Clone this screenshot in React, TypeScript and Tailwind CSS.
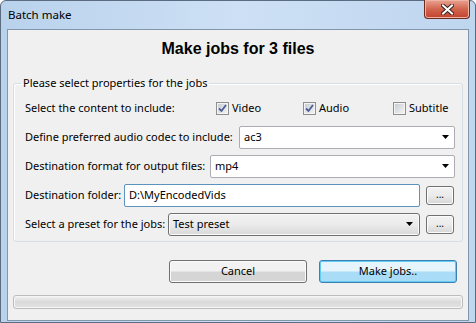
import React from 'react'

const ui = { fontFamily: '"Segoe UI", "Noto Sans", "Open Sans", sans-serif' }

const Check = ({ checked, label, className }: { checked: boolean; label: string; className?: string }) => (
  <label className={`flex items-center gap-[3px] ${className ?? ''}`}>
    <span className="w-[13px] h-[13px] border border-[#8e8f8f] bg-gradient-to-br from-[#c6cad1] to-[#f6f6f6] shadow-[inset_0_0_0_1px_#f4f4f4] flex items-center justify-center">
      {checked && (
        <svg width="9" height="9" viewBox="0 0 9 9">
          <path d="M1 4.5 L3.5 7 L8 1" fill="none" stroke="#4a5f97" strokeWidth="1.8" />
        </svg>
      )}
    </span>
    <span>{label}</span>
  </label>
)

const Arrow = () => (
  <svg width="7" height="4" viewBox="0 0 7 4" className="shrink-0">
    <path d="M0 0 H7 L3.5 4 Z" fill="#000" />
  </svg>
)

const Combo = ({ value }: { value: string }) => (
  <div className="flex-1 h-[23px] flex items-center justify-between bg-white border border-[#abadb3] rounded-[2px] pl-[4px] pr-[5px]">
    <span>{value}</span>
    <Arrow />
  </div>
)

const DotsButton = () => (
  <button className="w-[28px] h-[19px] ml-[6px] border border-[#707070] rounded-[3px] bg-gradient-to-b from-[#f2f2f2] via-[#ebebeb] to-[#d6d6d6] shadow-[inset_0_0_0_1px_#fcfcfc] flex items-center justify-center text-[10px] leading-none pb-[2px]">
    ...
  </button>
)

export default function App() {
  return (
    <div className="w-[476px] h-[323px] bg-white whitespace-nowrap" style={ui}>
      <div className="w-full h-full border border-[#5b6c80] rounded-t-[6px] bg-gradient-to-r from-[#b9d2ec] via-[#cde0f5] to-[#bfd6ef] px-[6px] pb-[1px] flex flex-col text-[11px] text-black">
        {/* title bar */}
        <div className="h-[28px] flex items-start justify-between shrink-0">
          <span className="pl-[1px] pt-[6px] leading-[16px] text-[11.5px]">Batch make</span>
          <div className="w-[46px] h-[19px] -mt-[1px] mr-[-1px] border border-[#6d2a20] border-t-0 rounded-b-[4px] bg-gradient-to-b from-[#e8a493] via-[#d2654f] to-[#c2412a] shadow-[inset_0_0_0_1px_#eeb3a3] flex items-center justify-center">
            <svg width="13" height="11" viewBox="0 0 13 11">
              <path d="M2 1.5 L11 9.5 M11 1.5 L2 9.5" stroke="#3b2420" strokeWidth="4" strokeLinecap="square" />
              <path d="M2 1.5 L11 9.5 M11 1.5 L2 9.5" stroke="#ffffff" strokeWidth="2" strokeLinecap="square" />
            </svg>
          </div>
        </div>

        {/* client */}
        <div className="flex-1 border border-[#8395ab] bg-[#f0f0f0] flex flex-col">
          <div className="pt-[10px] leading-[18px] text-center font-bold text-[16px]" style={{ fontFamily: '"Liberation Sans", Arial, sans-serif' }}>
            Make jobs for 3 files
          </div>

          <fieldset className="mt-[17px] mx-[5px] border border-[#d5dfe5] rounded-[3px] shadow-[inset_1px_1px_0_#ffffff] px-[11px] pb-[6px] pr-[7px]">
            <legend className="ml-[-4px] px-[2px] leading-[16px]">Please select properties for the jobs</legend>
            <div className="pt-[6px] flex flex-col gap-[7px]">
              <div className="h-[22px] flex items-center">
                <span className="w-[191px]">Select the content to include:</span>
                <Check checked label="Video" className="w-[87px]" />
                <Check checked label="Audio" className="w-[90px]" />
                <Check checked={false} label="Subtitle" />
              </div>
              <div className="h-[22px] flex items-center">
                <span className="w-[214px] shrink-0">Define preferred audio codec to include:</span>
                <Combo value="ac3" />
              </div>
              <div className="h-[22px] flex items-center">
                <span className="w-[185px] shrink-0">Destination format for output files:</span>
                <Combo value="mp4" />
              </div>
              <div className="h-[22px] flex items-center">
                <span className="w-[99px] shrink-0">Destination folder:</span>
                <div className="w-[296px] h-[23px] flex items-center bg-white border border-[#5c93bc] rounded-[2px] pl-[4px]">
                  D:\MyEncodedVids
                </div>
                <DotsButton />
              </div>
              <div className="h-[22px] flex items-center">
                <span className="w-[143px] shrink-0">Select a preset for the jobs:</span>
                <div className="w-[252px] h-[23px] flex items-center justify-between border border-[#707070] rounded-[3px] bg-gradient-to-b from-[#f2f2f2] via-[#ebebeb] to-[#d8d8d8] shadow-[inset_0_0_0_1px_#fbfbfb] pl-[4px] pr-[6px]">
                  <span>Test preset</span>
                  <Arrow />
                </div>
                <DotsButton />
              </div>
            </div>
          </fieldset>

          <div className="mt-[18px] pr-[11px] flex justify-end gap-[12px]">
            <button className="w-[138px] h-[23px] border border-[#707070] rounded-[3px] bg-gradient-to-b from-[#f2f2f2] from-45% to-[#d5d5d5] to-55% shadow-[inset_0_0_0_1px_#fbfbfb]">
              Cancel
            </button>
            <button className="w-[138px] h-[23px] border border-[#3c7fb1] rounded-[3px] bg-gradient-to-b from-[#e6f5fc] from-45% to-[#a9dcf6] to-55% shadow-[inset_0_0_0_1px_#62ccf5]">
              Make jobs..
            </button>
          </div>

          <div className="mt-[12px] mx-[5px] h-[14px] border border-[#bcbcbc] rounded-[3px] bg-gradient-to-b from-[#f3f3f3] via-[#dadada] to-[#e2e2e2] shadow-[inset_0_0_0_1px_#f6f6f6]" />
        </div>
      </div>
    </div>
  )
}
